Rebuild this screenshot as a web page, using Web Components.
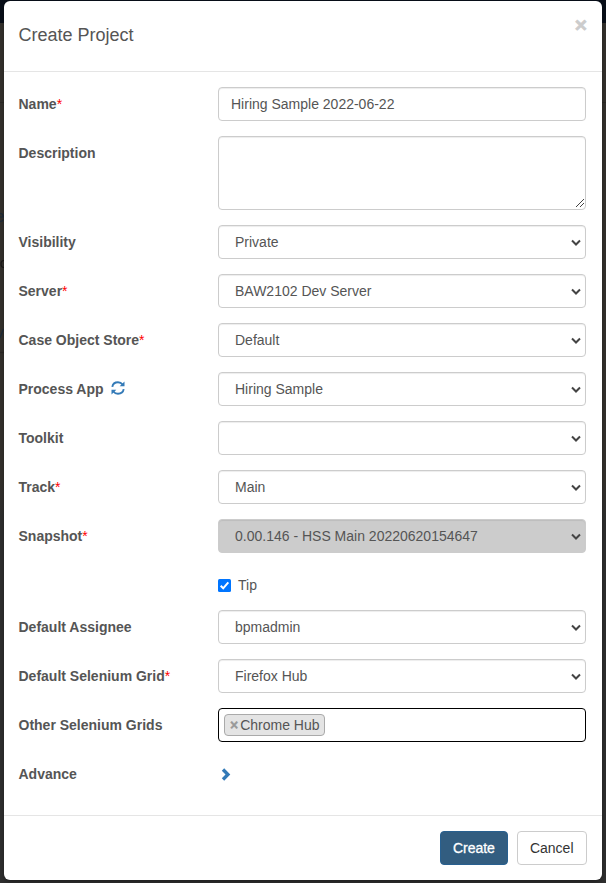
<!DOCTYPE html>
<html lang="en">
<head>
<meta charset="utf-8">
<title>Create Project</title>
<style>
html,body{margin:0;height:100%;overflow:hidden}
body{font:14px/20px "Liberation Sans",Arial,sans-serif;color:#555;background:linear-gradient(#080e18 0 23px,#33302c 23px 102px,#2a2825 102px 103px,#33302c 103px 480px,#2e2e2e 520px)}
</style>
</head>
<body>
<project-dialog></project-dialog>
<script>
const define = (name, html, setup) => customElements.define(name, class extends HTMLElement {
  connectedCallback() {
    if (this.shadowRoot) return;
    const t = document.createElement('template');
    t.innerHTML = html;
    this.attachShadow({mode: 'open'}).append(t.content.cloneNode(true));
    if (setup) setup(this, this.shadowRoot);
  }
});

define('form-row', `
<style>
:host{display:grid;grid-template-columns:199.500px 368px;margin-bottom:15px;min-height:34px}
.label{font-weight:700;padding-top:7px;color:#555;white-space:nowrap;display:flex}
.star{color:#f00;font-weight:400}
</style>
<div class="label"><span class="text"></span><slot name="icon"></slot></div>
<div><slot></slot></div>`, (el, root) => {
  const text = root.querySelector('.text');
  text.textContent = el.getAttribute('label') || '';
  if (el.hasAttribute('required')) {
    const s = document.createElement('span');
    s.className = 'star';
    s.textContent = '*';
    text.append(s);
  }
});

const box = `:host{display:flex;box-sizing:border-box;height:34px;border:1px solid #ccc;border-radius:4px;background:#fff;box-shadow:inset 0 1px 1px rgba(0,0,0,.075);color:#555;align-items:center;white-space:nowrap}`;

define('text-box', `<style>${box}:host{padding:0 12px}</style><slot></slot>`);

define('text-area', `
<style>${box}:host{height:74px;align-items:flex-end;justify-content:flex-end}svg{display:block;margin:0 1px 1px 0}</style>
<svg width="9" height="9" viewBox="0 0 9 9" shape-rendering="crispEdges"><path d="M.5 8.5l8-8M4.500 8.500l4-4" stroke="#444" fill="none"/></svg>`);

define('select-box', `
<style>${box}:host{padding:0 4px 0 16px}:host([disabled]){background:#ccc}svg{display:block;margin:1px 0 0 auto}</style>
<slot></slot>
<svg width="10" height="8" viewBox="0 0 10 8"><path d="M1 1.500L5 5.500L9 1.500" fill="none" stroke="#444" stroke-width="2"/></svg>`);

define('check-box', `
<style>:host{display:flex;align-items:center;height:34px;gap:7px}svg{display:block}</style>
<svg width="13" height="13" viewBox="0 0 13 13"><rect width="13" height="13" rx="1.500" fill="#0075ff"/><path d="M2.700 6.800L5.200 9.300L10.300 3.300" fill="none" stroke="#fff" stroke-width="2"/></svg>
<slot></slot>`);

define('tag-box', `
<style>${box}:host{border-color:#000;box-shadow:none;padding:0 5px}
.tag{display:flex;align-items:center;box-sizing:border-box;height:22px;border:1px solid #aaa;border-radius:4px;background:#e4e4e4;padding:0 4px 0 5px}
.x{font-weight:700;color:#999;margin-right:2px;-webkit-text-stroke:.4px #999}</style>
<div class="tag"><span class="x">×</span><slot></slot></div>`);

define('refresh-icon', `
<style>:host{display:block;margin:2px 0 0 7px}svg{display:block}</style>
<svg width="14" height="14" viewBox="0 0 14 14" fill="none" stroke="#337ab7" stroke-width="1.900"><path d="M1.300 5.800C1.800 3 4.200 1.300 7 1.300C8.900 1.300 10.500 2.100 11.600 3.500M12.700 8.200C12.200 11 9.800 12.700 7 12.700C5.100 12.700 3.500 11.900 2.400 10.500"/><path d="M13.500.5V5.300H8.700ZM.5 13.500V8.700H5.300Z" fill="#337ab7" stroke="none"/></svg>`);

define('chevron-icon', `
<style>:host{display:block;padding:11px 0 0 3px}svg{display:block}</style>
<svg width="10" height="13" viewBox="0 0 10 13"><path d="M3.200.3L9.300 6.500L3.200 12.700L.8 10.300L4.500 6.500L.8 2.700Z" fill="#337ab7"/></svg>`);

define('dialog-button', `
<style>:host{display:block;box-sizing:border-box;height:34px;padding:6px 12.500px 6px 11.500px;border:1px solid #ccc;border-radius:4px;background:#fff;color:#333}
:host([primary]){background:#325d80;border-color:#286090;color:#fff;-webkit-text-stroke:.3px #fff}</style><slot></slot>`);

define('page-behind', `
<style>:host{position:absolute;left:0;top:0;width:4px;height:883px;overflow:hidden}
svg{display:block}</style>
<svg width="4" height="883" fill="none" stroke-width="1.200"><path d="M0 213.500Q3.300 213.500 3.300 217H0M0 221.500Q2.500 221.500 3.500 219.500" stroke="#1b2a3a"/><path d="M4 260.500Q1 260.500 1 264T4 267.500" stroke="#1a1816"/><path d="M3.500 329L0 338" stroke="#1b2a3a"/><path d="M0 352.500H4" stroke="#292724"/></svg>`);

define('project-dialog', `
<style>
:host{display:block;padding:1px 4px 0}
section{position:relative;box-sizing:border-box;height:879px;background:#fff;border-radius:6px;box-shadow:0 2px 4px rgba(0,0,0,.3)}
header{box-sizing:border-box;height:71px;border-bottom:1px solid #e5e5e5;padding:0 15px 0 14.500px;display:flex;justify-content:space-between}
h4{font-size:18px;font-weight:400;margin:0;line-height:20px;padding-top:24px}
.close{font-size:21px;font-weight:700;color:#ccc;line-height:21px;padding-top:13px;-webkit-text-stroke:.7px #ccc}
main{box-sizing:border-box;height:743px;padding:15px 15px 0 14.500px}
footer{box-sizing:border-box;border-top:1px solid #e5e5e5;padding:15px;display:flex;justify-content:flex-end;gap:9px}
.tip{margin-bottom:8px}
</style>
<page-behind></page-behind>
<section>
<header><h4>Create Project</h4><span class="close">×</span></header>
<main>
<form-row label="Name" required><text-box>Hiring Sample 2022-06-22</text-box></form-row>
<form-row label="Description"><text-area></text-area></form-row>
<form-row label="Visibility"><select-box>Private</select-box></form-row>
<form-row label="Server" required><select-box>BAW2102 Dev Server</select-box></form-row>
<form-row label="Case Object Store" required><select-box>Default</select-box></form-row>
<form-row label="Process App"><refresh-icon slot="icon"></refresh-icon><select-box>Hiring Sample</select-box></form-row>
<form-row label="Toolkit"><select-box></select-box></form-row>
<form-row label="Track" required><select-box>Main</select-box></form-row>
<form-row label="Snapshot" required><select-box disabled>0.00.146 - HSS Main 20220620154647</select-box></form-row>
<form-row class="tip"><check-box>Tip</check-box></form-row>
<form-row label="Default Assignee"><select-box>bpmadmin</select-box></form-row>
<form-row label="Default Selenium Grid" required><select-box>Firefox Hub</select-box></form-row>
<form-row label="Other Selenium Grids"><tag-box>Chrome Hub</tag-box></form-row>
<form-row label="Advance"><chevron-icon></chevron-icon></form-row>
</main>
<footer><dialog-button primary>Create</dialog-button><dialog-button>Cancel</dialog-button></footer>
</section>`);
</script>
</body>
</html>
